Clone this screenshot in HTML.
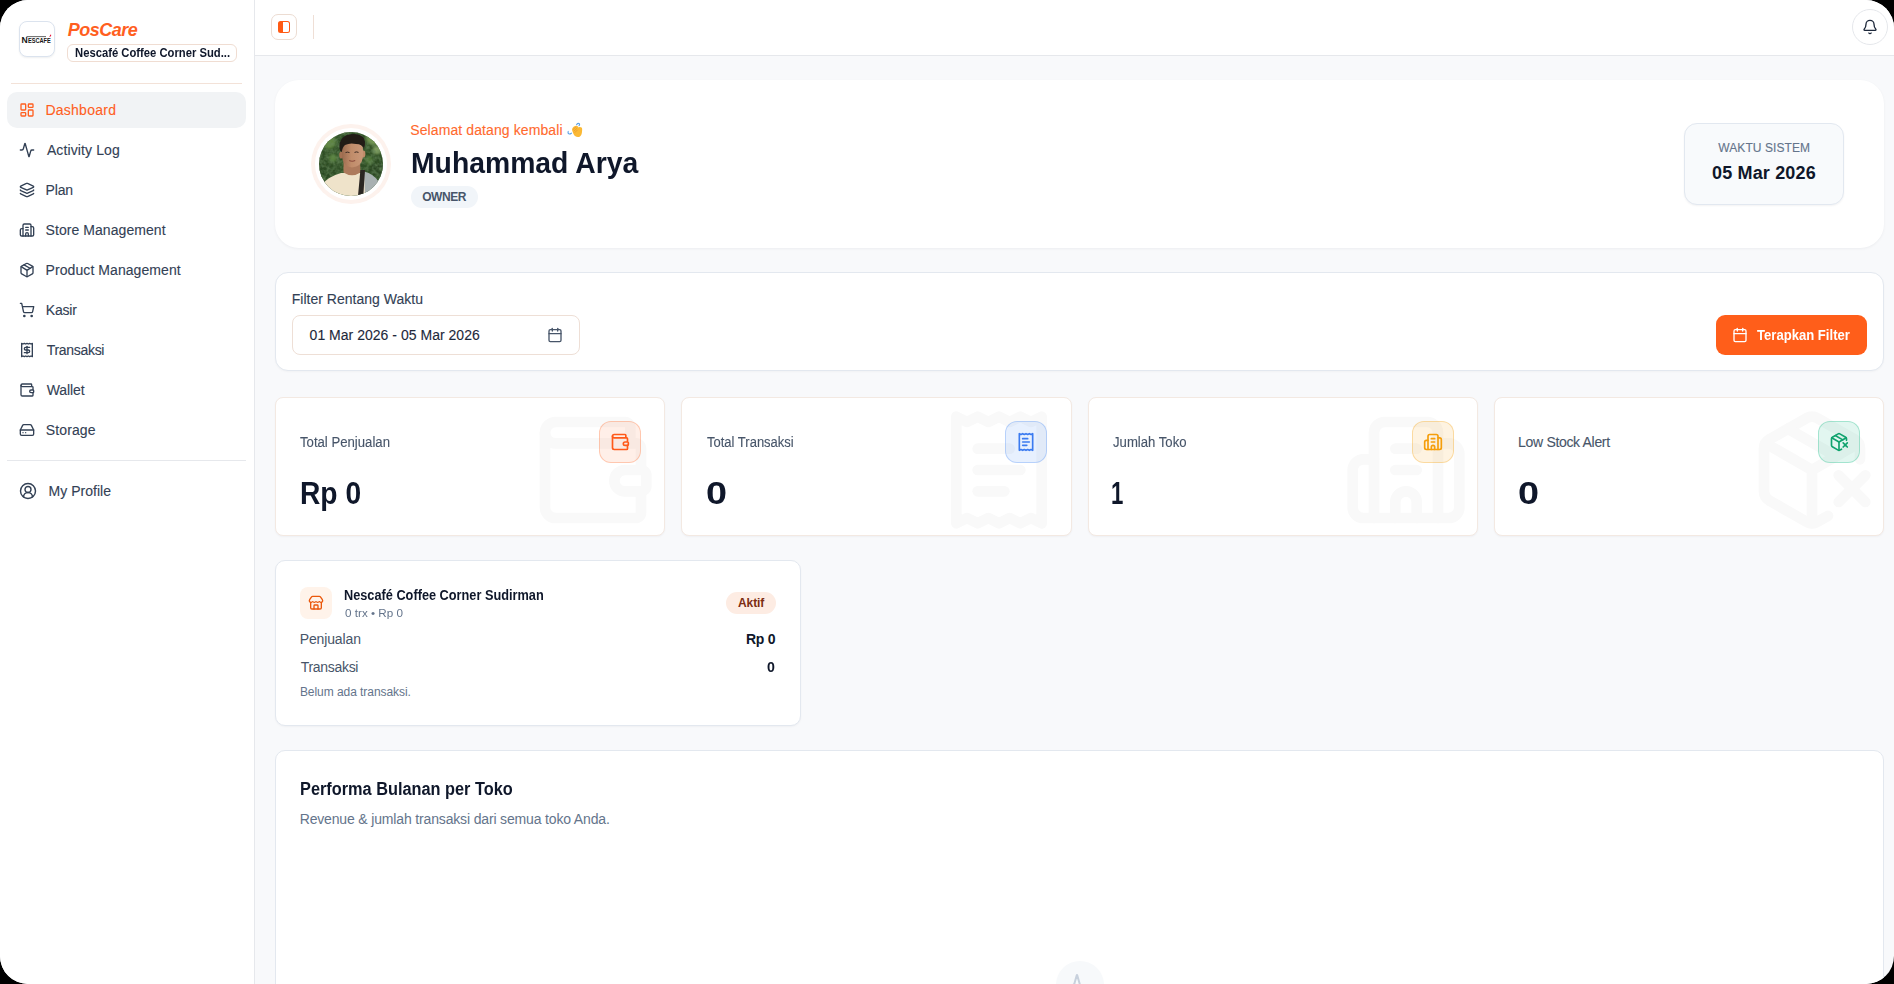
<!DOCTYPE html>
<html><head><meta charset="utf-8">
<style>
*{box-sizing:border-box;margin:0;padding:0}
html,body{width:1894px;height:984px;overflow:hidden;background:#000}
body{font-family:"Liberation Sans",sans-serif}
#page{position:absolute;left:0;top:0;width:1894px;height:984px;border-radius:28px;overflow:hidden;background:#f8f9fb}
.a{position:absolute}
.t{position:absolute;line-height:1;white-space:nowrap;transform-origin:0 0}
svg.i{position:absolute;fill:none;stroke:currentColor;stroke-width:2;stroke-linecap:round;stroke-linejoin:round;overflow:visible}
.ni{left:18.5px;width:16px;height:16px;color:#334155}
</style></head><body>
<div id="page">
<!-- sidebar -->
<div class="a" style="left:0;top:0;width:255px;height:984px;background:#fff;border-right:1px solid #e6e8ec"></div>
<div class="a" style="left:19px;top:21px;width:36px;height:36px;border:1px solid #dbe3ee;border-radius:8px;background:#fff;box-shadow:0 1px 2px rgba(15,23,42,.07)"></div>
<svg class="a" style="left:21px;top:33px;width:32px;height:12px" viewBox="0 0 32 12">
  <text x="0.6" y="10.3" font-family="Liberation Sans" font-weight="700" font-size="9.6" fill="#151515" textLength="6.2" lengthAdjust="spacingAndGlyphs">N</text>
  <text x="7.0" y="10.2" font-family="Liberation Sans" font-weight="700" font-size="7.6" fill="#151515" textLength="22.8" lengthAdjust="spacingAndGlyphs">ESCAFE</text>
  <rect x="5.5" y="3.2" width="19.5" height="0.9" fill="#555"/>
  <path d="M28.4 3.9 L29.4 1.6 L30.4 1.9 L29.1 4.1Z" fill="#e4002b"/>
</svg>
<div class="a" style="left:67px;top:44px;width:170px;height:18px;border:1px solid #f0ddd2;border-radius:6px;background:#fff"></div>
<div class="a" style="left:11px;top:83px;width:231px;height:1px;background:#f3e2d8"></div>
<div class="a" style="left:7px;top:92px;width:239px;height:36px;border-radius:10px;background:#f1f3f5"></div>
<svg class="i ni" viewBox="0 0 24 24" style="top:102px;color:#ff5f1f"><rect width="7" height="9" x="3" y="3" rx="1"/><rect width="7" height="5" x="14" y="3" rx="1"/><rect width="7" height="9" x="14" y="12" rx="1"/><rect width="7" height="5" x="3" y="16" rx="1"/></svg>
<svg class="i ni" viewBox="0 0 24 24" style="top:142px"><path d="M22 12h-2.48a2 2 0 0 0-1.93 1.46l-2.35 8.36a.25.25 0 0 1-.48 0L9.24 2.18a.25.25 0 0 0-.48 0l-2.35 8.36A2 2 0 0 1 4.49 12H2"/></svg>
<svg class="i ni" viewBox="0 0 24 24" style="top:182px"><path d="M12.83 2.18a2 2 0 0 0-1.66 0L2.6 6.08a1 1 0 0 0 0 1.83l8.58 3.91a2 2 0 0 0 1.66 0l8.58-3.9a1 1 0 0 0 0-1.83Z"/><path d="M2 12a1 1 0 0 0 .58.91l8.6 3.91a2 2 0 0 0 1.65 0l8.58-3.9A1 1 0 0 0 22 12"/><path d="M2 17a1 1 0 0 0 .58.91l8.6 3.91a2 2 0 0 0 1.65 0l8.58-3.9A1 1 0 0 0 22 17"/></svg>
<svg class="i ni" viewBox="0 0 24 24" style="top:222px"><path d="M10 12h4"/><path d="M10 8h4"/><path d="M14 21v-3a2 2 0 0 0-4 0v3"/><path d="M6 10H4a2 2 0 0 0-2 2v7a2 2 0 0 0 2 2h16a2 2 0 0 0 2-2V9a2 2 0 0 0-2-2h-2"/><path d="M6 21V5a2 2 0 0 1 2-2h8a2 2 0 0 1 2 2v16"/></svg>
<svg class="i ni" viewBox="0 0 24 24" style="top:262px"><path d="M11 21.73a2 2 0 0 0 2 0l7-4A2 2 0 0 0 21 16V8a2 2 0 0 0-1-1.73l-7-4a2 2 0 0 0-2 0l-7 4A2 2 0 0 0 3 8v8a2 2 0 0 0 1 1.73z"/><path d="M12 22V12"/><path d="m3.3 7 7.703 4.734a2 2 0 0 0 1.994 0L20.7 7"/><path d="m7.5 4.27 9 5.15"/></svg>
<svg class="i ni" viewBox="0 0 24 24" style="top:302px"><circle cx="8" cy="21" r="1"/><circle cx="19" cy="21" r="1"/><path d="M2.05 2.05h2l2.66 12.42a2 2 0 0 0 2 1.58h9.78a2 2 0 0 0 1.95-1.57l1.65-7.43H5.12"/></svg>
<svg class="i ni" viewBox="0 0 24 24" style="top:342px"><path d="M4 2v20l2-1 2 1 2-1 2 1 2-1 2 1 2-1 2 1V2l-2 1-2-1-2 1-2-1-2 1-2-1-2 1Z"/><path d="M16 8h-6a2 2 0 1 0 0 4h4a2 2 0 1 1 0 4H8"/><path d="M12 17.5v-11"/></svg>
<svg class="i ni" viewBox="0 0 24 24" style="top:382px"><path d="M19 7V4a1 1 0 0 0-1-1H5a2 2 0 0 0 0 4h15a1 1 0 0 1 1 1v4h-3a2 2 0 0 0 0 4h3a1 1 0 0 0 1-1v-2a1 1 0 0 0-1-1"/><path d="M3 5v14a2 2 0 0 0 2 2h15a1 1 0 0 0 1-1v-4"/></svg>
<svg class="i ni" viewBox="0 0 24 24" style="top:422px"><line x1="22" x2="2" y1="12" y2="12"/><path d="M5.45 5.11 2 12v6a2 2 0 0 0 2 2h16a2 2 0 0 0 2-2v-6l-3.45-6.89A2 2 0 0 0 16.76 4H7.24a2 2 0 0 0-1.79 1.11z"/><line x1="6" x2="6.01" y1="16" y2="16"/><line x1="10" x2="10.01" y1="16" y2="16"/></svg>
<div class="a" style="left:7px;top:460px;width:239px;height:1px;background:#e6e8ec"></div>
<svg class="i" viewBox="0 0 24 24" style="left:19px;top:482px;width:18px;height:18px;color:#334155;stroke-width:1.9"><path d="M18 20a6 6 0 0 0-12 0"/><circle cx="12" cy="10" r="4"/><circle cx="12" cy="12" r="10"/></svg>

<!-- topbar -->
<div class="a" style="left:255px;top:0;width:1639px;height:56px;background:#fff;border-bottom:1px solid #e6e8ec"></div>
<div class="a" style="left:271px;top:14px;width:26px;height:26px;border:1px solid #ecdcd2;border-radius:7px;background:#fff"></div>
<div class="a" style="left:278px;top:21px;width:12px;height:12px;border:1.5px solid #ff5a14;border-left:5px solid #ff5a14;border-radius:2.5px"></div>
<div class="a" style="left:313px;top:15px;width:1px;height:24px;background:#efdfd6"></div>
<div class="a" style="left:1852px;top:9px;width:36px;height:36px;border:1px solid #e5e7eb;border-radius:50%;background:#fff"></div>
<svg class="i" viewBox="0 0 24 24" style="left:1862px;top:19px;width:16px;height:16px;color:#1e293b"><path d="M10.268 21a2 2 0 0 0 3.464 0"/><path d="M3.262 15.326A1 1 0 0 0 4 17h16a1 1 0 0 0 .74-1.673C19.41 13.956 18 12.499 18 8A6 6 0 0 0 6 8c0 4.499-1.411 5.956-2.738 7.326"/></svg>

<!-- welcome card -->
<div class="a" style="left:275px;top:80px;width:1609px;height:168px;border-radius:24px;background:#fff;box-shadow:0 1px 3px rgba(15,23,42,.05)"></div>
<div class="a" style="left:311px;top:124px;width:80px;height:80px;border-radius:50%;background:#fdf2ed"></div>
<div class="a" style="left:315px;top:128px;width:72px;height:72px;border-radius:50%;background:#fff"></div>
<svg class="a" style="left:319px;top:132px;width:64px;height:64px" viewBox="0 0 64 64">
<defs>
<clipPath id="avc"><circle cx="32" cy="32" r="32"/></clipPath>
<filter id="leaf" x="0" y="0" width="100%" height="100%">
<feTurbulence type="fractalNoise" baseFrequency="0.28" numOctaves="2" seed="7" result="n"/>
<feColorMatrix in="n" type="matrix" values="0 0 0 0 0.13  0 0 0 0 0.24  0 0 0 0 0.10  1.6 0 0 0 -0.55" result="c"/>
<feComposite in="c" in2="SourceGraphic" operator="in"/>
</filter>
<filter id="avb1" x="-30%" y="-30%" width="160%" height="160%"><feGaussianBlur stdDeviation="1.8"/></filter>
<filter id="avb2" x="-10%" y="-10%" width="120%" height="120%"><feGaussianBlur stdDeviation="0.5"/></filter>
<linearGradient id="skin" x1="0" x2="1" y1="0" y2="0"><stop offset="0" stop-color="#9a6a4e"/><stop offset="0.45" stop-color="#c08c6a"/><stop offset="1" stop-color="#c99878"/></linearGradient>
</defs>
<g clip-path="url(#avc)">
<rect width="64" height="64" fill="#2f4e25"/>
<g filter="url(#avb1)">
<circle cx="10" cy="10" r="7" fill="#5f8640"/>
<circle cx="54" cy="6" r="7" fill="#789b52"/>
<circle cx="58" cy="18" r="4" fill="#8aa764"/>
<circle cx="58" cy="38" r="7" fill="#2a4520"/>
<circle cx="6" cy="40" r="7" fill="#2b4821"/>
<circle cx="14" cy="26" r="4" fill="#5b8540"/>
<circle cx="50" cy="28" r="4" fill="#4f7838"/>
</g>
<rect width="64" height="64" fill="#fff" filter="url(#leaf)"/>
<g filter="url(#avb2)">
<path d="M0 64 L3 53 Q8 45 22 41 L42 41 Q54 43 60 51 L64 64 Z" fill="#efe3ca"/>
<path d="M45 39.5 Q55 42 60 50 L62 64 L46 64 Z" fill="#a9b1b2"/>
<path d="M24.5 30 L41 30 L41.5 40.5 Q33 46 24.5 40.5 Z" fill="#ad7a5b"/>
<path d="M41.4 38 L46 38 L44.3 64 L39 64 Z" fill="#2b2522"/>
<ellipse cx="22.2" cy="23" rx="2" ry="3.6" fill="#a47153"/>
<ellipse cx="44.4" cy="22" rx="2" ry="3.4" fill="#c08c6a"/>
<path d="M22.8 17 Q23 10.5 33.5 10.5 Q44.5 10.5 44 18 L43.8 26 Q42.5 34.5 33 35.5 Q24.5 34.5 23.2 26 Z" fill="url(#skin)"/>
<path d="M21 18.5 Q18.5 7 28 3 Q38 0 44 5 Q47.5 9 45 17 Q43.5 12 37 12 Q31 10.5 26 13 Q23.5 15 22.8 20 Z" fill="#221b18"/>
<path d="M26.5 20.6 Q28.5 19.6 30.5 20.6" stroke="#3b2a22" stroke-width="1" fill="none"/>
<path d="M35.5 20.4 Q37.5 19.4 39.5 20.4" stroke="#3b2a22" stroke-width="1" fill="none"/>
<path d="M30.2 28.6 Q33.2 29.8 36.2 28.6" stroke="#8a4a3c" stroke-width="1.1" fill="none"/>
</g>
</g>
</svg>

<svg class="a" style="left:566px;top:121px;width:18px;height:18px" viewBox="0 0 18 18">
<defs><filter id="hb"><feGaussianBlur stdDeviation="0.3"/></filter></defs>
<g filter="url(#hb)">
<path d="M6.2 9.5 C5.6 8.2 6.8 6.6 8 5.6 C9 4.8 10.4 4.4 11.4 5 C12 5.4 12.2 6 12.6 6.4 C13.6 5.6 14.8 5.8 15.6 6.6 C16.4 7.6 16.2 9.2 16 10.8 C15.8 12.8 15.4 14.4 14 15.4 C12.6 16.4 10.6 16.2 9 15 C7.6 13.8 6.8 11.4 6.2 9.5Z" fill="#fbb936"/>
<path d="M7.2 8.4 L9.6 6.2 M8 10 L10.6 7.6 M9 11.4 L11.4 9" stroke="#e5932a" stroke-width="0.7" stroke-linecap="round"/>
<path d="M10.6 3.6 C11.4 2.6 12.6 2.2 13.4 2.8 C13.8 3.2 13.6 4 13 4.6" stroke="#5aa0e6" stroke-width="1.1" fill="none" stroke-linecap="round"/>
<path d="M2.2 10.4 C1.8 11.4 2 12.4 2.8 12.8 C3.6 13.2 4.6 12.8 5.4 12.2" stroke="#5aa0e6" stroke-width="1.1" fill="none" stroke-linecap="round"/>
</g>
</svg>
<div class="a" style="left:411px;top:186px;width:67px;height:22px;border-radius:11px;background:#f1f5f9"></div>
<div class="a" style="left:1684px;top:123px;width:160px;height:82px;border-radius:13px;background:#f8fafc;border:1px solid #e2e8f0;box-shadow:0 1px 2px rgba(15,23,42,.05)"></div>

<!-- filter card -->
<div class="a" style="left:275px;top:272px;width:1609px;height:99px;border-radius:13px;background:#fff;border:1px solid #e3e8ef;box-shadow:0 1px 2px rgba(15,23,42,.03)"></div>
<div class="a" style="left:292px;top:315px;width:288px;height:40px;border-radius:8px;border:1px solid #eedfd6;background:#fff"></div>
<svg class="i" viewBox="0 0 24 24" style="left:546.5px;top:327px;width:16px;height:16px;color:#475569"><path d="M8 2v4"/><path d="M16 2v4"/><rect width="18" height="18" x="3" y="4" rx="2"/><path d="M3 10h18"/></svg>
<div class="a" style="left:1716px;top:315px;width:151px;height:40px;border-radius:9px;background:#ff5e1a"></div>
<svg class="i" viewBox="0 0 24 24" style="left:1732px;top:327px;width:16px;height:16px;color:#fff"><path d="M8 2v4"/><path d="M16 2v4"/><rect width="18" height="18" x="3" y="4" rx="2"/><path d="M3 10h18"/></svg>

<div class="a" style="left:275px;top:397px;width:390.25px;height:139px;border-radius:8px;background:#fff;border:1px solid #f3e9e2;box-shadow:0 1px 2px rgba(15,23,42,.04);overflow:hidden">
<svg class="i" viewBox="0 0 24 24" style="left:253px;top:8px;width:128px;height:128px;color:#f9f9f9"><path d="M19 7V4a1 1 0 0 0-1-1H5a2 2 0 0 0 0 4h15a1 1 0 0 1 1 1v4h-3a2 2 0 0 0 0 4h3a1 1 0 0 0 1-1v-2a1 1 0 0 0-1-1"/><path d="M3 5v14a2 2 0 0 0 2 2h15a1 1 0 0 0 1-1v-4"/></svg>
<div class="a" style="left:323px;top:23px;width:42px;height:42px;border-radius:12px;background:rgba(255,94,26,.10);border:1px solid rgba(255,94,26,.28)"></div>
<svg class="i" viewBox="0 0 24 24" style="left:334px;top:34px;width:20px;height:20px;color:#ff5a1a"><path d="M19 7V4a1 1 0 0 0-1-1H5a2 2 0 0 0 0 4h15a1 1 0 0 1 1 1v4h-3a2 2 0 0 0 0 4h3a1 1 0 0 0 1-1v-2a1 1 0 0 0-1-1"/><path d="M3 5v14a2 2 0 0 0 2 2h15a1 1 0 0 0 1-1v-4"/></svg>
</div>
<div class="a" style="left:681.25px;top:397px;width:390.25px;height:139px;border-radius:8px;background:#fff;border:1px solid #f3e9e2;box-shadow:0 1px 2px rgba(15,23,42,.04);overflow:hidden">
<svg class="i" viewBox="0 0 24 24" style="left:253px;top:8px;width:128px;height:128px;color:#f9f9f9"><path d="M4 2v20l2-1 2 1 2-1 2 1 2-1 2 1 2-1 2 1V2l-2 1-2-1-2 1-2-1-2 1-2-1-2 1Z"/><path d="M14 8H8"/><path d="M16 12H8"/><path d="M13 16H8"/></svg>
<div class="a" style="left:323px;top:23px;width:42px;height:42px;border-radius:12px;background:rgba(59,130,246,.12);border:1px solid rgba(59,130,246,.28)"></div>
<svg class="i" viewBox="0 0 24 24" style="left:334px;top:34px;width:20px;height:20px;color:#3b7bf0"><path d="M4 2v20l2-1 2 1 2-1 2 1 2-1 2 1 2-1 2 1V2l-2 1-2-1-2 1-2-1-2 1-2-1-2 1Z"/><path d="M14 8H8"/><path d="M16 12H8"/><path d="M13 16H8"/></svg>
</div>
<div class="a" style="left:1087.5px;top:397px;width:390.25px;height:139px;border-radius:8px;background:#fff;border:1px solid #f3e9e2;box-shadow:0 1px 2px rgba(15,23,42,.04);overflow:hidden">
<svg class="i" viewBox="0 0 24 24" style="left:253px;top:8px;width:128px;height:128px;color:#f9f9f9"><path d="M10 12h4"/><path d="M10 8h4"/><path d="M14 21v-3a2 2 0 0 0-4 0v3"/><path d="M6 10H4a2 2 0 0 0-2 2v7a2 2 0 0 0 2 2h16a2 2 0 0 0 2-2V9a2 2 0 0 0-2-2h-2"/><path d="M6 21V5a2 2 0 0 1 2-2h8a2 2 0 0 1 2 2v16"/></svg>
<div class="a" style="left:323px;top:23px;width:42px;height:42px;border-radius:12px;background:rgba(245,158,11,.12);border:1px solid rgba(245,158,11,.30)"></div>
<svg class="i" viewBox="0 0 24 24" style="left:334px;top:34px;width:20px;height:20px;color:#f59e0b"><path d="M10 12h4"/><path d="M10 8h4"/><path d="M14 21v-3a2 2 0 0 0-4 0v3"/><path d="M6 10H4a2 2 0 0 0-2 2v7a2 2 0 0 0 2 2h16a2 2 0 0 0 2-2V9a2 2 0 0 0-2-2h-2"/><path d="M6 21V5a2 2 0 0 1 2-2h8a2 2 0 0 1 2 2v16"/></svg>
</div>
<div class="a" style="left:1493.75px;top:397px;width:390.25px;height:139px;border-radius:8px;background:#fff;border:1px solid #f3e9e2;box-shadow:0 1px 2px rgba(15,23,42,.04);overflow:hidden">
<svg class="i" viewBox="0 0 24 24" style="left:253px;top:8px;width:128px;height:128px;color:#f9f9f9"><path d="M21 10V8a2 2 0 0 0-1-1.73l-7-4a2 2 0 0 0-2 0l-7 4A2 2 0 0 0 3 8v8a2 2 0 0 0 1 1.73l7 4a2 2 0 0 0 2 0l2-1.14"/><path d="m7.5 4.27 9 5.15"/><polyline points="3.29 7 12 12 20.71 7"/><line x1="12" x2="12" y1="22" y2="12"/><path d="m17 13 5 5m-5 0 5-5"/></svg>
<div class="a" style="left:323px;top:23px;width:42px;height:42px;border-radius:12px;background:rgba(16,185,129,.12);border:1px solid rgba(16,185,129,.30)"></div>
<svg class="i" viewBox="0 0 24 24" style="left:334px;top:34px;width:20px;height:20px;color:#10a36e"><path d="M21 10V8a2 2 0 0 0-1-1.73l-7-4a2 2 0 0 0-2 0l-7 4A2 2 0 0 0 3 8v8a2 2 0 0 0 1 1.73l7 4a2 2 0 0 0 2 0l2-1.14"/><path d="m7.5 4.27 9 5.15"/><polyline points="3.29 7 12 12 20.71 7"/><line x1="12" x2="12" y1="22" y2="12"/><path d="m17 13 5 5m-5 0 5-5"/></svg>
</div>


<!-- store card -->
<div class="a" style="left:275px;top:560px;width:526px;height:166px;border-radius:10px;background:#fff;border:1px solid #e3e8ef;box-shadow:0 1px 2px rgba(15,23,42,.04)"></div>
<div class="a" style="left:300px;top:587px;width:32px;height:32px;border-radius:8px;background:#fff3ea"></div>
<svg class="i" viewBox="0 0 24 24" style="left:308px;top:594.5px;width:16px;height:16px;color:#ea580c"><path d="M15 21v-5a1 1 0 0 0-1-1h-4a1 1 0 0 0-1 1v5"/><path d="M17.774 10.31a1.12 1.12 0 0 0-1.549 0 2.5 2.5 0 0 1-3.451 0 1.12 1.12 0 0 0-1.548 0 2.5 2.5 0 0 1-3.452 0 1.12 1.12 0 0 0-1.549 0 2.5 2.5 0 0 1-3.77-3.248l2.889-4.184A2 2 0 0 1 7 2h10a2 2 0 0 1 1.653.873l2.895 4.192a2.5 2.5 0 0 1-3.774 3.244"/><path d="M4 10.95V19a2 2 0 0 0 2 2h12a2 2 0 0 0 2-2v-8.05"/></svg>
<div class="a" style="left:726px;top:592px;width:50px;height:22px;border-radius:11px;background:#fdece3"></div>

<!-- chart card -->
<div class="a" style="left:275px;top:750px;width:1609px;height:260px;border-radius:10px;background:#fff;border:1px solid #e3e8ef"></div>
<div class="a" style="left:1056px;top:961px;width:48px;height:48px;border-radius:50%;background:#f7f9fb"></div>
<svg class="i" viewBox="0 0 24 24" style="left:1068px;top:973px;width:24px;height:24px;color:#c8d1dd"><path d="M22 12h-2.48a2 2 0 0 0-1.93 1.46l-2.35 8.36a.25.25 0 0 1-.48 0L9.24 2.18a.25.25 0 0 0-.48 0l-2.35 8.36A2 2 0 0 1 4.49 12H2"/></svg>

<div class="t" style="left:67.70px;top:20.76px;font-size:18px;font-weight:700;color:#ff5f1f;font-style:italic;letter-spacing:-0.483px;">PosCare</div>
<div class="t" style="left:74.60px;top:46.74px;font-size:12px;font-weight:700;color:#0f172a;transform:scaleX(0.9376);">Nescafé Coffee Corner Sud...</div>
<div class="t" style="left:45.40px;top:103.05px;font-size:14px;font-weight:400;color:#ff5f1f;letter-spacing:0.262px;-webkit-text-stroke:0.12px currentColor;">Dashboard</div>
<div class="t" style="left:46.90px;top:143.05px;font-size:14px;font-weight:400;color:#334155;letter-spacing:0.118px;-webkit-text-stroke:0.12px currentColor;">Activity Log</div>
<div class="t" style="left:45.60px;top:183.05px;font-size:14px;font-weight:400;color:#334155;letter-spacing:-0.200px;-webkit-text-stroke:0.12px currentColor;">Plan</div>
<div class="t" style="left:45.60px;top:223.05px;font-size:14px;font-weight:400;color:#334155;letter-spacing:0.060px;-webkit-text-stroke:0.12px currentColor;">Store Management</div>
<div class="t" style="left:45.60px;top:263.05px;font-size:14px;font-weight:400;color:#334155;letter-spacing:0.071px;-webkit-text-stroke:0.12px currentColor;">Product Management</div>
<div class="t" style="left:45.80px;top:303.05px;font-size:14px;font-weight:400;color:#334155;letter-spacing:-0.200px;-webkit-text-stroke:0.12px currentColor;">Kasir</div>
<div class="t" style="left:46.80px;top:343.05px;font-size:14px;font-weight:400;color:#334155;letter-spacing:-0.312px;-webkit-text-stroke:0.12px currentColor;">Transaksi</div>
<div class="t" style="left:46.80px;top:383.05px;font-size:14px;font-weight:400;color:#334155;letter-spacing:-0.120px;-webkit-text-stroke:0.12px currentColor;">Wallet</div>
<div class="t" style="left:45.80px;top:423.05px;font-size:14px;font-weight:400;color:#334155;letter-spacing:0.117px;-webkit-text-stroke:0.12px currentColor;">Storage</div>
<div class="t" style="left:48.50px;top:484.35px;font-size:14px;font-weight:400;color:#334155;letter-spacing:0.033px;-webkit-text-stroke:0.12px currentColor;">My Profile</div>
<div class="t" style="left:410.30px;top:123.25px;font-size:14px;font-weight:400;color:#ff6a2e;letter-spacing:0.095px;-webkit-text-stroke:0.12px currentColor;">Selamat datang kembali</div>
<div class="t" style="left:410.81px;top:147.70px;font-size:30px;font-weight:700;color:#0f172a;transform:scaleX(0.9444);">Muhammad Arya</div>
<div class="t" style="left:422.20px;top:190.84px;font-size:12px;font-weight:700;color:#475569;letter-spacing:-0.450px;">OWNER</div>
<div class="t" style="left:1718.30px;top:141.64px;font-size:12px;font-weight:400;color:#64748b;letter-spacing:0.082px;-webkit-text-stroke:0.12px currentColor;">WAKTU SISTEM</div>
<div class="t" style="left:1712.00px;top:164.46px;font-size:18px;font-weight:700;color:#0f172a;letter-spacing:0.160px;">05 Mar 2026</div>
<div class="t" style="left:291.80px;top:292.15px;font-size:14px;font-weight:400;color:#334155;letter-spacing:0.011px;-webkit-text-stroke:0.12px currentColor;">Filter Rentang Waktu</div>
<div class="t" style="left:309.60px;top:328.05px;font-size:14px;font-weight:400;color:#1e293b;letter-spacing:0.021px;-webkit-text-stroke:0.12px currentColor;">01 Mar 2026 - 05 Mar 2026</div>
<div class="t" style="left:1756.70px;top:327.95px;font-size:14px;font-weight:700;color:#ffffff;transform:scaleX(0.9350);">Terapkan Filter</div>
<div class="t" style="left:300.40px;top:435.05px;font-size:14px;font-weight:400;color:#475569;transform:scaleX(0.9400);-webkit-text-stroke:0.12px currentColor;">Total Penjualan</div>
<div class="t" style="left:706.60px;top:435.05px;font-size:14px;font-weight:400;color:#475569;transform:scaleX(0.9290);-webkit-text-stroke:0.12px currentColor;">Total Transaksi</div>
<div class="t" style="left:1112.60px;top:435.05px;font-size:14px;font-weight:400;color:#475569;transform:scaleX(0.9385);-webkit-text-stroke:0.12px currentColor;">Jumlah Toko</div>
<div class="t" style="left:1518.10px;top:435.05px;font-size:14px;font-weight:400;color:#475569;letter-spacing:-0.321px;-webkit-text-stroke:0.12px currentColor;">Low Stock Alert</div>
<div class="t" style="left:299.98px;top:477.66px;font-size:31px;font-weight:700;color:#0f172a;transform:scaleX(0.9094);">Rp 0</div>
<div class="t" style="left:705.82px;top:476.81px;font-size:32px;font-weight:700;color:#0f172a;transform:scaleX(1.1812);">0</div>
<div class="t" style="left:1111.21px;top:476.81px;font-size:32px;font-weight:700;color:#0f172a;transform:scaleX(0.6933);">1</div>
<div class="t" style="left:1518.32px;top:476.81px;font-size:32px;font-weight:700;color:#0f172a;transform:scaleX(1.1813);">0</div>
<div class="t" style="left:343.79px;top:587.95px;font-size:14px;font-weight:700;color:#0f172a;transform:scaleX(0.9101);">Nescafé Coffee Corner Sudirman</div>
<div class="t" style="left:344.70px;top:607.69px;font-size:11px;font-weight:400;color:#64748b;transform:scaleX(1.0618);">0 trx • Rp 0</div>
<div class="t" style="left:738.00px;top:596.54px;font-size:12px;font-weight:700;color:#7c2d12;letter-spacing:-0.075px;">Aktif</div>
<div class="t" style="left:299.70px;top:632.05px;font-size:14px;font-weight:400;color:#475569;letter-spacing:-0.125px;">Penjualan</div>
<div class="t" style="left:745.90px;top:632.05px;font-size:14px;font-weight:700;color:#0f172a;letter-spacing:-0.267px;">Rp 0</div>
<div class="t" style="left:300.70px;top:659.75px;font-size:14px;font-weight:400;color:#475569;letter-spacing:-0.300px;">Transaksi</div>
<div class="t" style="left:767.00px;top:659.85px;font-size:14px;font-weight:700;color:#0f172a;transform:scaleX(1.0125);">0</div>
<div class="t" style="left:299.90px;top:686.44px;font-size:12px;font-weight:400;color:#64748b;letter-spacing:-0.053px;">Belum ada transaksi.</div>
<div class="t" style="left:299.79px;top:779.76px;font-size:18px;font-weight:700;color:#0f172a;transform:scaleX(0.9064);">Performa Bulanan per Toko</div>
<div class="t" style="left:299.70px;top:812.15px;font-size:14px;font-weight:400;color:#64748b;letter-spacing:-0.157px;">Revenue &amp; jumlah transaksi dari semua toko Anda.</div>
</div>
</body></html>
